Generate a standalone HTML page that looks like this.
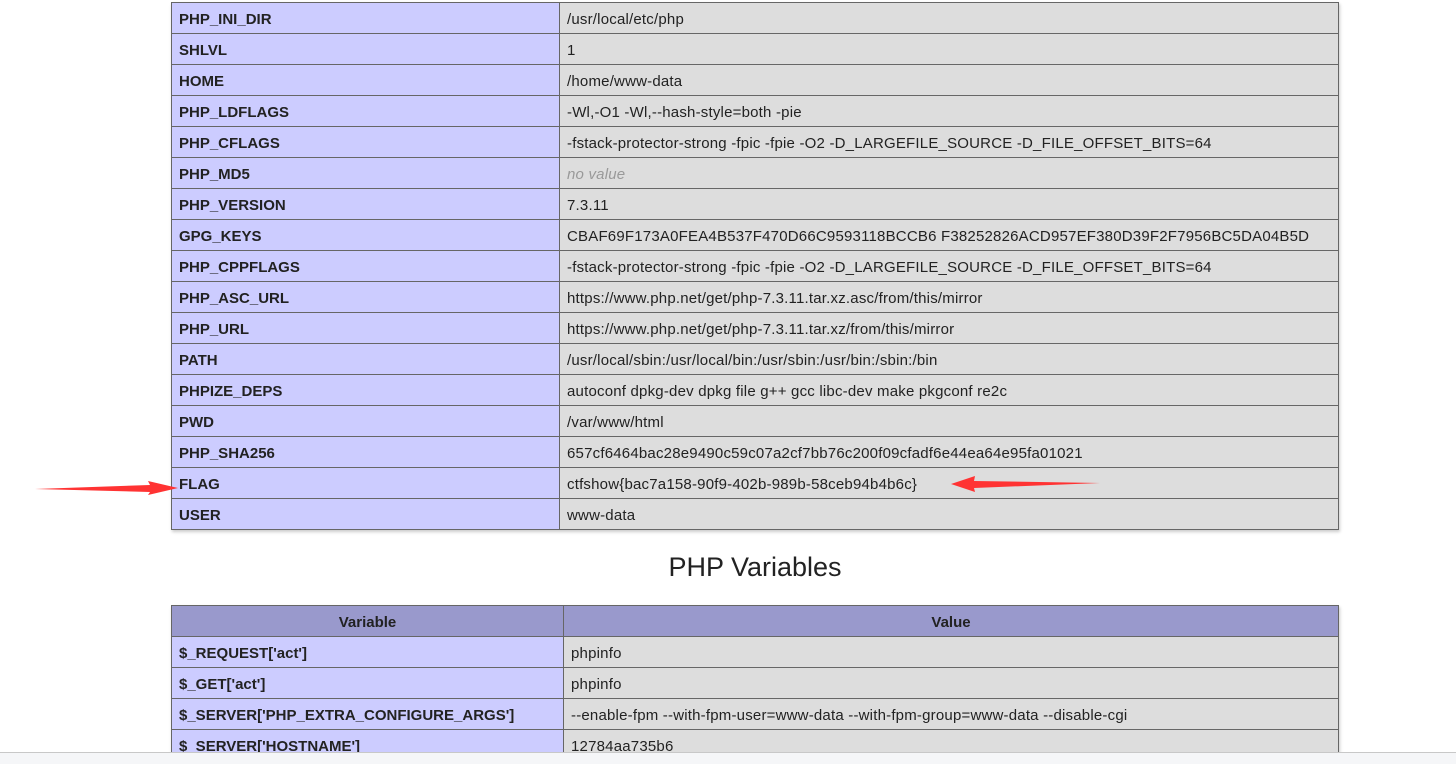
<!DOCTYPE html>
<html><head><meta charset="utf-8"><style>
body{margin:0;width:1456px;height:763px;overflow:hidden;background:#fff;font-family:"Liberation Sans",Arial,sans-serif;font-size:15px;color:#222;position:relative}
table{position:absolute;border-collapse:collapse;box-shadow:1px 2px 3px #ccc;table-layout:fixed}
td,th{border:1px solid #666;height:30px;padding:2px 7px 0;white-space:nowrap;overflow:hidden;box-sizing:border-box}
td.e{background:#ccf;font-weight:bold}
td.v{background:#ddd;letter-spacing:0.2px}
th{background:#99c;font-weight:bold}
i{color:#999}
h2{position:absolute;left:0;width:1510px;text-align:center;top:552px;margin:0;font-size:27px;font-weight:normal;color:#222}
.bar{position:absolute;left:0;top:752px;width:1456px;height:11px;background:#f5f6f8;border-top:1px solid #c8c8c8}
</style></head><body>
<table style="left:171px;top:2px;width:1167px">
<col style="width:388px"><col style="width:779px">
<tr style="height:31px"><td class="e">PHP_INI_DIR</td><td class="v">/usr/local/etc/php</td></tr>
<tr style="height:31px"><td class="e">SHLVL</td><td class="v">1</td></tr>
<tr style="height:31px"><td class="e">HOME</td><td class="v">/home/www-data</td></tr>
<tr style="height:31px"><td class="e">PHP_LDFLAGS</td><td class="v">-Wl,-O1 -Wl,--hash-style=both -pie</td></tr>
<tr style="height:31px"><td class="e">PHP_CFLAGS</td><td class="v">-fstack-protector-strong -fpic -fpie -O2 -D_LARGEFILE_SOURCE -D_FILE_OFFSET_BITS=64</td></tr>
<tr style="height:31px"><td class="e">PHP_MD5</td><td class="v"><i>no value</i></td></tr>
<tr style="height:31px"><td class="e">PHP_VERSION</td><td class="v">7.3.11</td></tr>
<tr style="height:31px"><td class="e">GPG_KEYS</td><td class="v">CBAF69F173A0FEA4B537F470D66C9593118BCCB6 F38252826ACD957EF380D39F2F7956BC5DA04B5D</td></tr>
<tr style="height:31px"><td class="e">PHP_CPPFLAGS</td><td class="v">-fstack-protector-strong -fpic -fpie -O2 -D_LARGEFILE_SOURCE -D_FILE_OFFSET_BITS=64</td></tr>
<tr style="height:31px"><td class="e">PHP_ASC_URL</td><td class="v">https://www.php.net/get/php-7.3.11.tar.xz.asc/from/this/mirror</td></tr>
<tr style="height:31px"><td class="e">PHP_URL</td><td class="v">https://www.php.net/get/php-7.3.11.tar.xz/from/this/mirror</td></tr>
<tr style="height:31px"><td class="e">PATH</td><td class="v">/usr/local/sbin:/usr/local/bin:/usr/sbin:/usr/bin:/sbin:/bin</td></tr>
<tr style="height:31px"><td class="e">PHPIZE_DEPS</td><td class="v">autoconf dpkg-dev dpkg file g++ gcc libc-dev make pkgconf re2c</td></tr>
<tr style="height:31px"><td class="e">PWD</td><td class="v">/var/www/html</td></tr>
<tr style="height:31px"><td class="e">PHP_SHA256</td><td class="v">657cf6464bac28e9490c59c07a2cf7bb76c200f09cfadf6e44ea64e95fa01021</td></tr>
<tr style="height:31px"><td class="e">FLAG</td><td class="v">ctfshow{bac7a158-90f9-402b-989b-58ceb94b4b6c}</td></tr>
<tr style="height:31px"><td class="e">USER</td><td class="v">www-data</td></tr>
</table>
<h2>PHP Variables</h2>
<table style="left:171px;top:605px;width:1167px">
<col style="width:392px"><col style="width:775px">
<tr style="height:31px"><th>Variable</th><th>Value</th></tr>
<tr style="height:31px"><td class="e">$_REQUEST['act']</td><td class="v">phpinfo</td></tr>
<tr style="height:31px"><td class="e">$_GET['act']</td><td class="v">phpinfo</td></tr>
<tr style="height:31px"><td class="e">$_SERVER['PHP_EXTRA_CONFIGURE_ARGS']</td><td class="v">--enable-fpm --with-fpm-user=www-data --with-fpm-group=www-data --disable-cgi</td></tr>
<tr style="height:31px"><td class="e">$_SERVER['HOSTNAME']</td><td class="v">12784aa735b6</td></tr>
</table>
<svg style="position:absolute;left:0;top:0" width="1456" height="763">
<polygon points="35,489 150,485 148,481 178,488 148,495 150,492" fill="#f33"/>
<polygon points="951,484 975,476 974,481 1100,483 974,488 975,492" fill="#f33"/>
</svg>
<div class="bar"></div>
</body></html>
